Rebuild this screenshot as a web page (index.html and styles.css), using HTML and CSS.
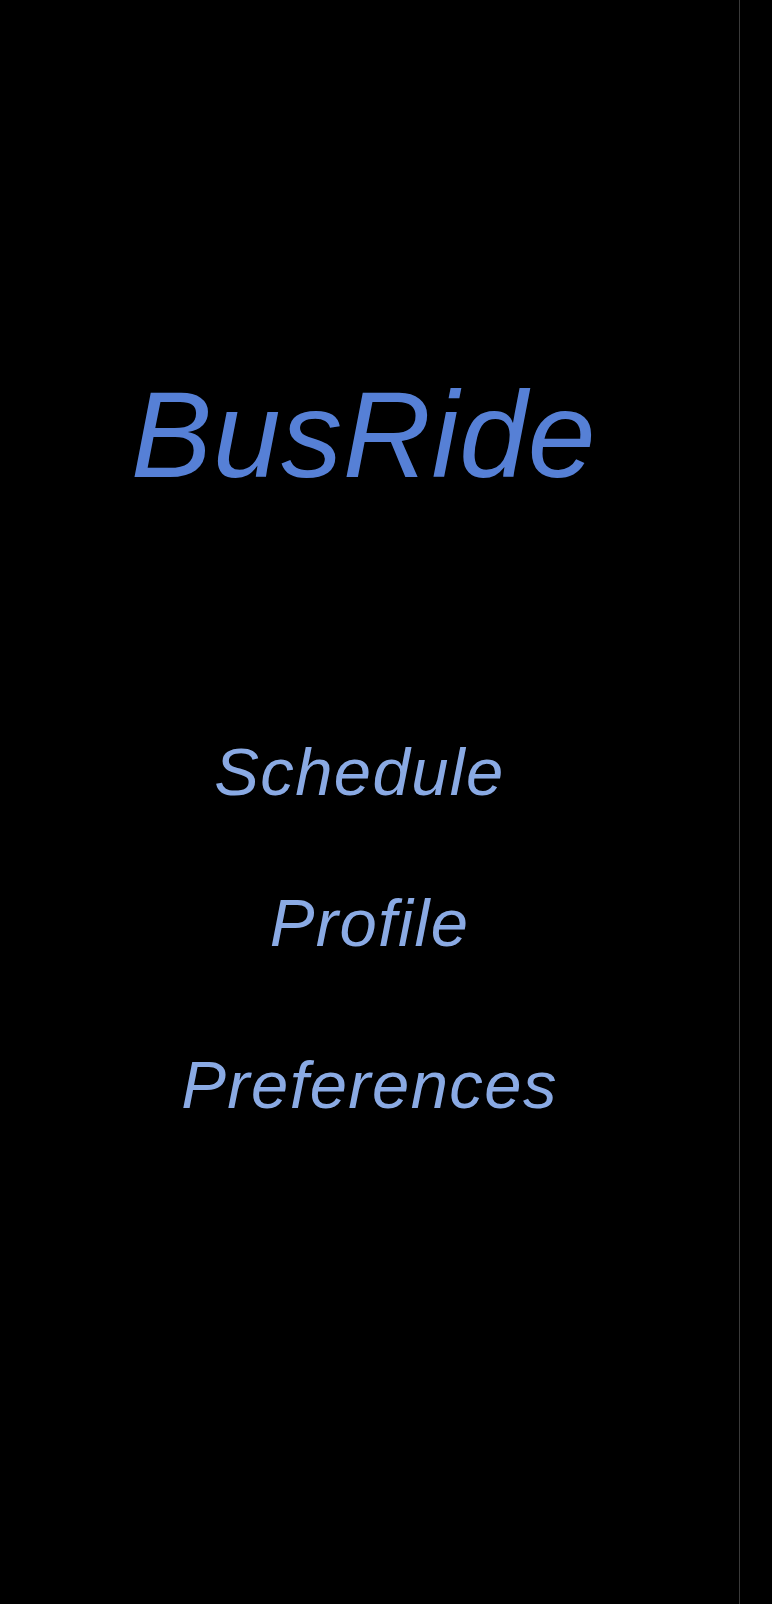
FILE: index.html
```html
<!DOCTYPE html>
<html lang="en">
<head>
<meta charset="utf-8">
<title>BusRide</title>
<link rel="stylesheet" href="styles.css">
</head>
<body>
<div class="app">
  <main class="menu-screen">
    <h1 class="brand">BusRide</h1>
    <nav class="menu">
      <a class="menu-item menu-item--schedule" href="#">Schedule</a>
      <a class="menu-item" href="#">Profile</a>
      <a class="menu-item menu-item--last" href="#">Preferences</a>
    </nav>
  </main>
</div>
</body>
</html>
```
FILE: styles.css
```css
html, body {
  margin: 0;
  padding: 0;
  background: #000;
}

.app {
  display: flex;
  width: 772px;
  height: 1604px;
  background: #000;
}

.menu-screen {
  width: 740px;
  height: 1604px;
  border-right: 1px solid #3a3a3a;
  display: flex;
  flex-direction: column;
  align-items: center;
  padding-top: 374px;
  box-sizing: border-box;
  font-family: "Liberation Sans", Arial, sans-serif;
  font-style: italic;
}

.brand {
  margin: 0;
  padding-right: 12px;
  font-size: 122px;
  line-height: 1;
  font-weight: normal;
  font-style: italic;
  letter-spacing: 0.6px;
  color: #5680d6;
}

.menu {
  display: flex;
  flex-direction: column;
  align-items: center;
  gap: 84px;
  margin-top: 242px;
}

.menu-item {
  font-size: 67px;
  line-height: 1;
  letter-spacing: 1.4px;
  color: #8aaae4;
  text-decoration: none;
}

.menu-item--schedule {
  padding-right: 20px;
}

.menu-item--last {
  margin-top: 11px;
}
```
